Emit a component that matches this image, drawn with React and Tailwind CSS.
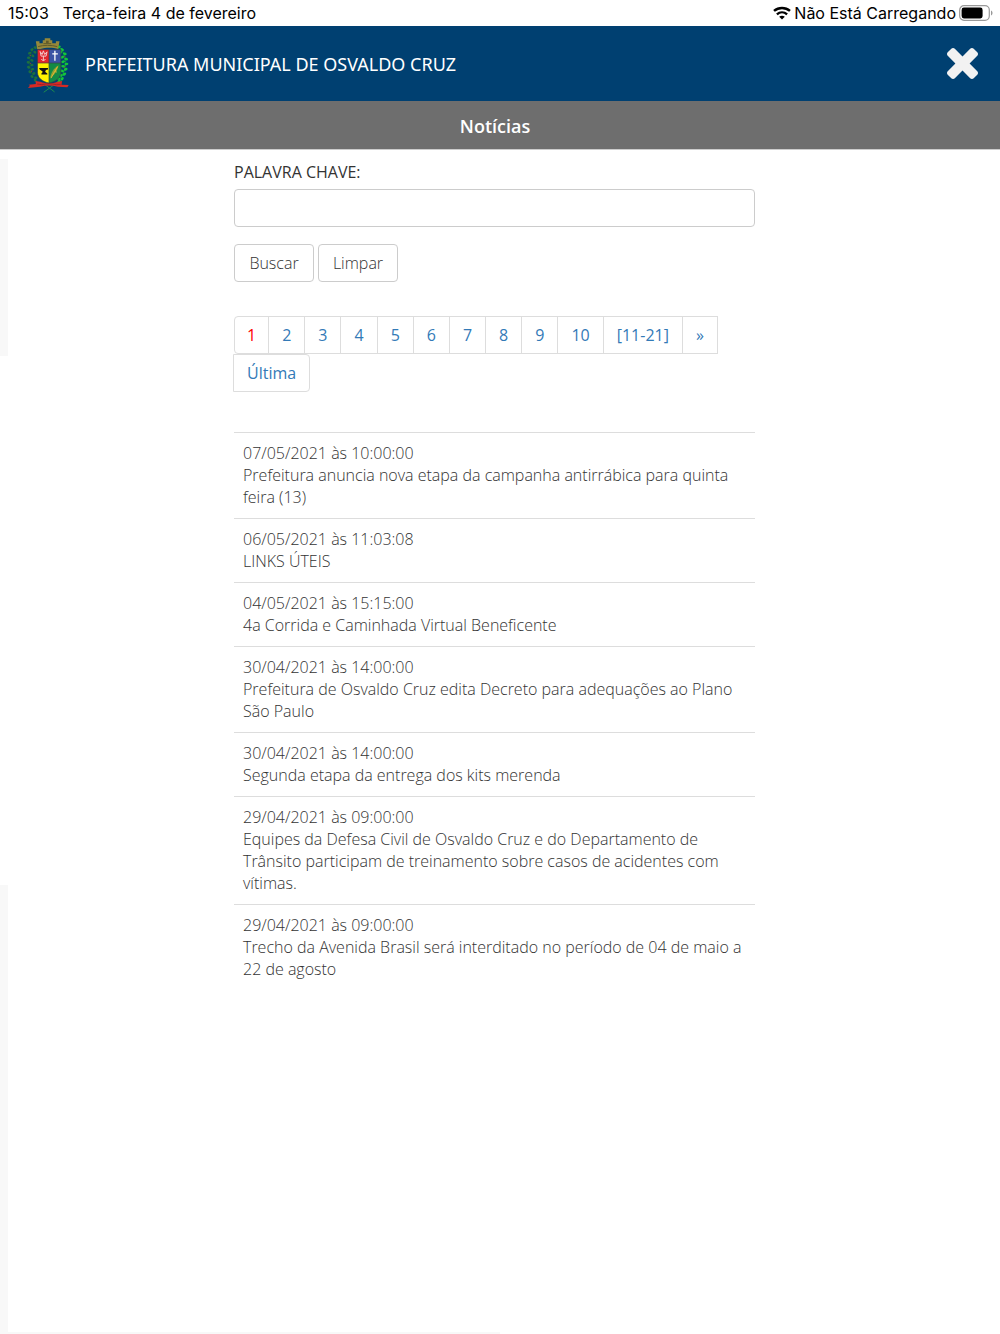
import React from "react";

const pages = ["1", "2", "3", "4", "5", "6", "7", "8", "9", "10", "[11-21]", "»", "Última"];

const news = [
  { date: "07/05/2021 às 10:00:00", title: "Prefeitura anuncia nova etapa da campanha antirrábica para quinta feira (13)" },
  { date: "06/05/2021 às 11:03:08", title: "LINKS ÚTEIS" },
  { date: "04/05/2021 às 15:15:00", title: "4a Corrida e Caminhada Virtual Beneficente" },
  { date: "30/04/2021 às 14:00:00", title: "Prefeitura de Osvaldo Cruz edita Decreto para adequações ao Plano São Paulo" },
  { date: "30/04/2021 às 14:00:00", title: "Segunda etapa da entrega dos kits merenda" },
  { date: "29/04/2021 às 09:00:00", title: "Equipes da Defesa Civil de Osvaldo Cruz e do Departamento de Trânsito participam de treinamento sobre casos de acidentes com vítimas." },
  { date: "29/04/2021 às 09:00:00", title: "Trecho da Avenida Brasil será interditado no período de 04 de maio a 22 de agosto" },
];

// laurel leaves: [x, y, rotation]
const leftLeaves = [
  [57, 55, 20], [47, 61, -30], [56, 69, 30], [40, 72, -20], [50, 80, 30], [37, 86, -10], [47, 94, 20],
  [36, 100, 10], [47, 108, 0], [37, 115, 25], [49, 121, -15], [41, 129, 35], [53, 134, -20], [47, 143, 50],
  [59, 147, 10], [57, 154, 60],
];
const rightLeaves = [
  [129, 53, -20], [139, 61, 30], [134, 70, -40], [147, 74, 15], [140, 84, -30], [151, 90, 10], [142, 98, -20],
  [152, 105, -10], [142, 112, 10], [150, 121, -25], [139, 126, 20], [146, 136, -35], [135, 139, 20], [139, 150, -50],
  [127, 149, 10], [130, 158, -60],
];

function Crest() {
  return (
    <svg viewBox="26 18 140 174" className="h-[58px] w-[46px]" role="img" aria-label="Brasão de Osvaldo Cruz">
      <path d="M52 58C34 84 36 130 62 158" fill="none" stroke="#14583c" strokeWidth="3" />
      <path d="M134 58C158 84 154 130 124 160" fill="none" stroke="#15903c" strokeWidth="3" />
      {leftLeaves.map(([x, y, r]) => (
        <ellipse key={`${x}-${y}`} cx={x} cy={y} rx="5" ry="4" fill="#1c7040" transform={`rotate(${r} ${x} ${y})`} />
      ))}
      {rightLeaves.map(([x, y, r]) => (
        <ellipse key={`${x}-${y}`} cx={x} cy={y} rx="6" ry="4" fill="#14c63a" transform={`rotate(${r} ${x} ${y})`} />
      ))}
      <g fill="#8c3540">
        <circle cx="42" cy="79" r="2" />
        <circle cx="43" cy="103" r="2" />
        <circle cx="46" cy="127" r="2" />
        <circle cx="147" cy="83" r="2" />
        <circle cx="146" cy="115" r="2" />
      </g>
      {/* mural crown */}
      <path d="M63 59L59 36h11v6h10v-9h6v-6h17v6h6v9h11v-6h11l-4 23c-16-5-38-5-54 0z" fill="#96883a" />
      <path d="M66 52c16-5 42-5 58 0M82 43h24" fill="none" stroke="#5f5a2b" strokeWidth="3" />
      <path d="M90 34h8v7h-8z" fill="#5f5a2b" />
      {/* quartered shield */}
      <path d="M64 61h35v41H64z" fill="#e2262d" />
      <path d="M99 61h36v41H99z" fill="#3b53a5" />
      <path d="M64 102h35v61c-20-4-34-15-35-32z" fill="#fff200" />
      <path d="M99 102h36v29c-1 17-16 28-36 32z" fill="#128a45" />
      <path d="M64 61h71v69c0 18-16 29-36 33-20-4-35-15-35-33zM99 61v102M64 102h71" fill="none" stroke="#3b4140" strokeWidth="2" />
      <path d="M72 67l6 9 4-11 4 11 7-8-3 13H75zM82 80v15m-6-5c2 6 10 6 12 0" fill="none" stroke="#f2c9cb" strokeWidth="3" />
      <path d="M117 65v30M109 74h17" fill="none" stroke="#fff" strokeWidth="4" />
      <path d="M69 117h27v5c-7 1-9 4-8 7l6 5v3H76v-3l4-5c-1-5-10-4-11-12z" fill="#111" />
      <path d="M128 109c-3 17-11 28-25 38 2-15 9-28 25-38z" fill="#8fa032" />
      <path d="M125 113l-20 35M118 122l3 9" fill="none" stroke="#e0b634" strokeWidth="3" />
      {/* stems and ribbon */}
      <path d="M83 191l32-23M116 190l-29-22" fill="none" stroke="#1d8c4c" strokeWidth="3" />
      <path d="M58 157l15 2c18 7 35 7 52 0l14-2-2 11 22 1-4 7-29-2c-18-5-36-5-54 0l-37 4 6-7-4-3 22-2z" fill="#d62a25" />
      <path d="M63 166l14 2c15-4 30-4 44 0l14-1" fill="none" stroke="#812229" strokeWidth="2" />
    </svg>
  );
}

function StatusBar() {
  return (
    <div className="flex h-[26px] items-center justify-between bg-white pl-2 pr-[7px] font-['Inter',sans-serif] text-[16px] leading-5 text-black">
      <div className="flex gap-[14px]">
        <span>15:03</span>
        <span>Terça-feira 4 de fevereiro</span>
      </div>
      <div className="flex items-center gap-[3px]">
        <svg viewBox="0 0 18 14" className="h-[14px] w-[18px]" fill="none" stroke="currentColor" aria-hidden="true">
          <path d="M1 4.9C5.7.9 12.3.9 17 4.9" strokeWidth="2.5" />
          <path d="M3.9 8.3c3-2.6 7.2-2.6 10.2 0" strokeWidth="2.4" />
          <path d="M9 13.4L6.2 10.7c1.5-1.3 4.1-1.3 5.6 0z" fill="currentColor" stroke="none" />
        </svg>
        <span>Não Está Carregando</span>
        <svg viewBox="0 0 34 16" className="h-4 w-[34px]" aria-hidden="true">
          <rect x=".7" y=".7" width="29.6" height="14.6" rx="4.3" fill="#fff" stroke="#999" strokeWidth="1.2" />
          <rect x="2.6" y="2.6" width="21" height="10.8" rx="2.3" />
          <path d="M32 5.5c2 .8 2 4.2 0 5z" fill="#999" />
        </svg>
      </div>
    </div>
  );
}

function Pagination() {
  return (
    <nav aria-label="Páginas">
      <ul className="flex flex-wrap text-[16px] font-medium leading-[22px] text-[#337ab7]">
        {pages.map((page, i) => (
          <li key={page} className="-ml-px first:ml-0">
            <a
              href="#"
              aria-current={i === 0 ? "page" : undefined}
              className={`block border border-[#ddd] py-[7px] ${
                i === 0 ? "rounded-l px-3 text-[#f00]" : "px-[13px]"
              } ${i === pages.length - 1 ? "rounded-r" : ""}`}
            >
              {page}
            </a>
          </li>
        ))}
      </ul>
    </nav>
  );
}

export default function App() {
  return (
    <div className="flex min-h-screen flex-col bg-white font-['Open_Sans',sans-serif] text-[#333]">
      <StatusBar />

      <header className="flex h-[75px] items-center justify-between bg-[#004071] pl-[25px] pr-[22px]">
        <div className="flex items-center gap-[14px]">
          <Crest />
          <span className="font-['Noto_Sans',sans-serif] text-[18px] leading-6 text-white">
            PREFEITURA MUNICIPAL DE OSVALDO CRUZ
          </span>
        </div>
        <button type="button" aria-label="Fechar" className="text-[#f2f2f2]">
          <svg viewBox="302 366 1188 1188" className="h-[31px] w-[31px]" fill="currentColor">
            <path d="M1490 1322q0 40-28 68l-136 136q-28 28-68 28t-68-28l-294-294-294 294q-28 28-68 28t-68-28l-136-136q-28-28-28-68t28-68l294-294-294-294q-28-28-28-68t28-68l136-136q28-28 68-28t68 28l294 294 294-294q28-28 68-28t68 28l136 136q28 28 28 68t-28 68l-294 294 294 294q28 28 28 68z" />
          </svg>
        </button>
      </header>

      <div className="border-b border-[#ccc] bg-[#6e6e6e] pb-[11px] pr-[10px] pt-[13px] text-center">
        <h1 className="text-[18px] font-semibold leading-6 text-white">Notícias</h1>
      </div>

      <div className="flex flex-1">
        <div className="flex w-2 flex-col">
          <div className="mt-[9px] h-[197px] bg-[#f8f8f8]" />
          <div className="mt-[529px] flex-1 bg-[#f8f8f8]" />
        </div>

        <main className="flex-1 pr-[19px]">
          <div className="mx-auto max-w-[521px] pt-[11px]">
            <form onSubmit={(e) => e.preventDefault()}>
              <label htmlFor="palavra" className="block text-[16px] leading-[22px] text-[#333]">
                PALAVRA CHAVE:
              </label>
              <input
                id="palavra"
                type="text"
                className="mt-[6px] block h-[38px] w-full rounded border border-[#ccc] px-3 text-[16px]"
              />
              <div className="mt-[17px] flex gap-1 text-[16px] font-light leading-[22px]">
                <button type="submit" className="h-[38px] w-20 rounded border border-[#ccc]">Buscar</button>
                <button type="reset" className="h-[38px] w-20 rounded border border-[#ccc]">Limpar</button>
              </div>
            </form>

            <div className="mt-[34px]">
              <Pagination />
            </div>

            <ul className="mt-10 text-[16px] font-light leading-[22px]">
              {news.map((item) => (
                <li key={item.title} className="border-t border-[#ddd] px-[9px] pb-[10px] pt-[9px]">
                  <p>{item.date}</p>
                  <a href="#" className="block">{item.title}</a>
                </li>
              ))}
            </ul>
          </div>
        </main>
      </div>

      <div className="h-[2px] w-1/2 bg-[#f8f8f8]" />
    </div>
  );
}
